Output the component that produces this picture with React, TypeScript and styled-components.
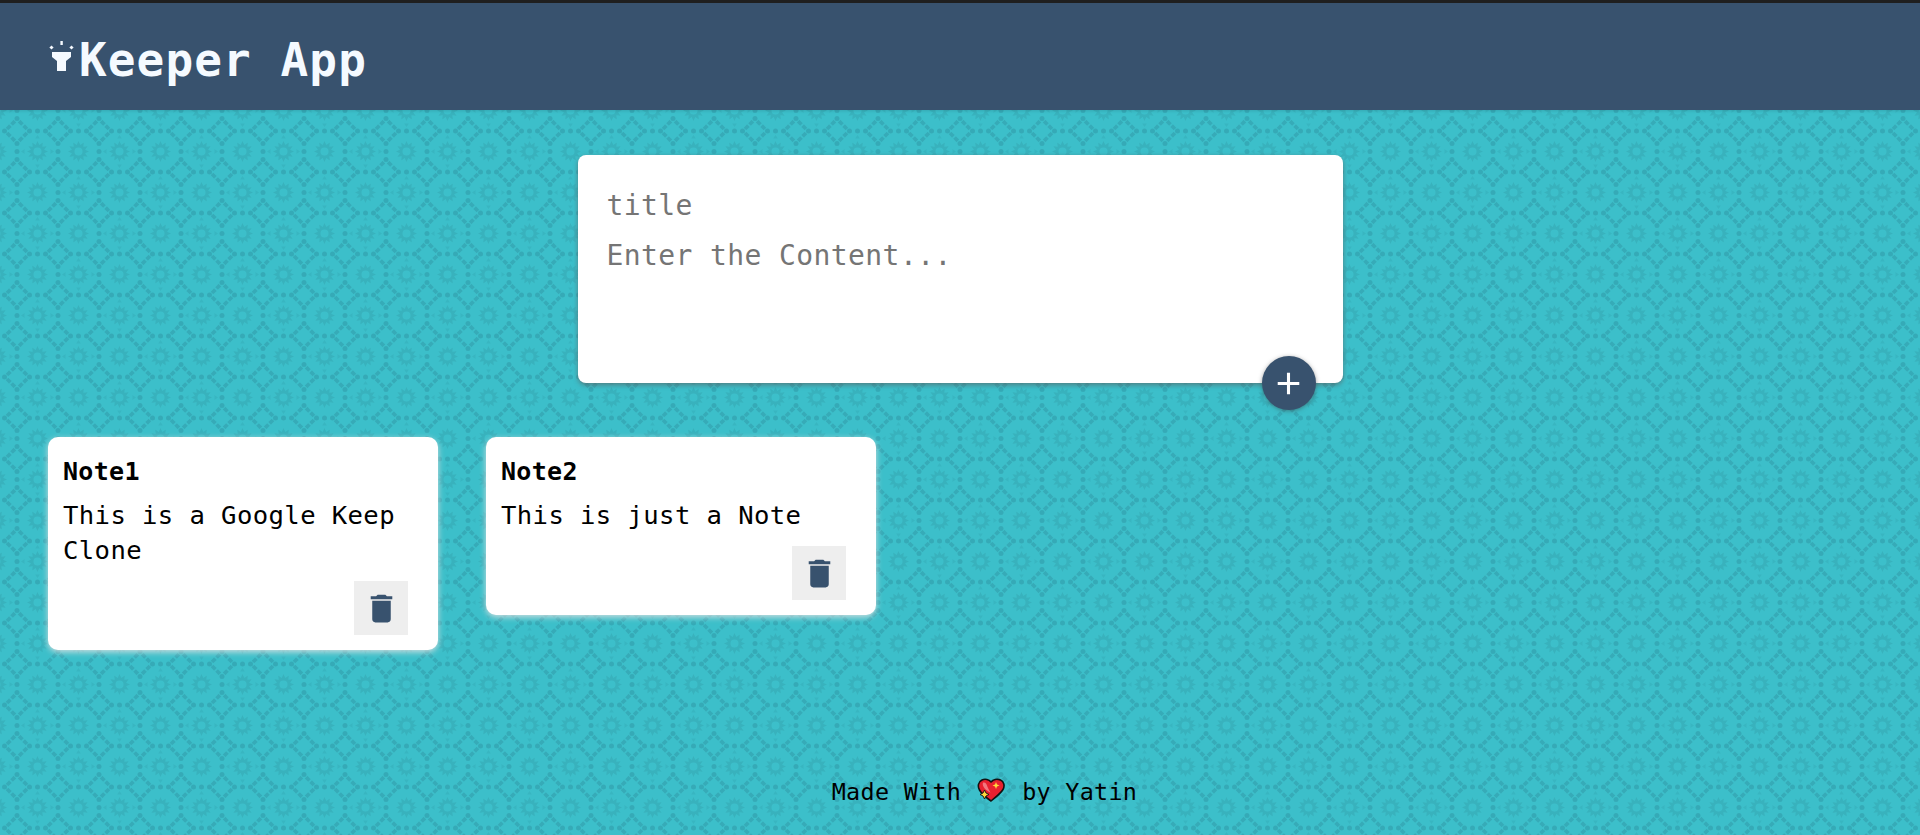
import * as React from 'react';
import styled, { createGlobalStyle } from 'styled-components';

const MONO = `"DejaVu Sans Mono", "Liberation Mono", monospace`;

// background tile: checker of octagons with a spiky ring in each cell
const buildTile = () => {
    const CELL = 41;
    const ink = '#2f98a6';
    let out = '';
    const centers = [
        [20.5, 20.5, 0],
        [61.5, 20.5, 1],
        [20.5, 61.5, 1],
        [61.5, 61.5, 0],
    ];
    centers.forEach(([cx, cy, kind]) => {
        let outer = '';
        const spikes = 12;
        for (let i = 0; i < spikes * 2; i++) {
            const r = i % 2 === 0 ? 10.5 : 6.8;
            const a = (Math.PI * i) / spikes;
            outer += `${i === 0 ? 'M' : 'L'}${(cx + r * Math.cos(a)).toFixed(1)} ${(cy + r * Math.sin(a)).toFixed(1)}`;
        }
        outer += 'Z';
        const hole = `M${cx - 4} ${cy}a4 4 0 1 0 8 0a4 4 0 1 0 -8 0Z`;
        out += `<path fill-rule="evenodd" fill="${ink}" fill-opacity=".34" d="${outer}${hole}"/>`;

        // three dots on every cell edge
        [-8, 0, 8].forEach((d) => {
            out += `<circle cx="${cx + d}" cy="${cy - CELL / 2}" r="2.5" fill="${ink}" fill-opacity=".52"/>`;
            out += `<circle cx="${cx - CELL / 2}" cy="${cy + d}" r="2.5" fill="${ink}" fill-opacity=".52"/>`;
        });

        // chamfers: together they make a diamond round each lattice corner
        [
            [1, 1],
            [1, -1],
            [-1, 1],
            [-1, -1],
        ].forEach(([sx, sy]) => {
            const x1 = cx + sx * 10.5;
            const y1 = cy + sy * 18.5;
            const x2 = cx + sx * 18.5;
            const y2 = cy + sy * 10.5;
            out += `<line x1="${x1}" y1="${y1}" x2="${x2}" y2="${y2}" stroke="${ink}" stroke-opacity=".5" stroke-width="3.8" stroke-dasharray="4.800 1.600"/>`;
        });
        if (kind === 1) {
            [
                [0, -14.5],
                [0, 14.5],
                [-14.5, 0],
                [14.5, 0],
            ].forEach(([dx, dy]) => {
                out += `<path d="M${cx + dx - 2.5} ${cy + dy + 1.5}h5l-2.5 -3.500z" fill="${ink}" fill-opacity=".26" transform="rotate(${dx === 0 ? (dy < 0 ? 0 : 180) : dx < 0 ? 270 : 90} ${cx + dx} ${cy + dy})"/>`;
            });
        }
    });
    // repeat the group one tile over so that dots on the seam are whole
    const copies = [82, 0].map((x) =>
        [82, 0].map((y) => `<use href="#c" x="${x}" y="${y}"/>`).join('')
    );
    const svg = `<svg xmlns="http://www.w3.org/2000/svg" xmlns:xlink="http://www.w3.org/1999/xlink" width="82" height="82" viewBox="0 0 82 82"><defs><g id="c">${out}</g></defs>${copies.join('')}</svg>`;
    return `url("data:image/svg+xml,${encodeURIComponent(svg)}")`;
};

const GlobalStyle = createGlobalStyle`
    * {
        box-sizing: border-box;
    }
    html, body {
        margin: 0;
        padding: 0;
    }
    body {
        font-family: ${MONO};
        background-color: #3cbfca;
        background-image: ${buildTile()};
        background-position: 17px 8px;
    }
`;

const Page = styled.div`
    min-height: 100vh;
    display: flex;
    flex-direction: column;
`;

const HeaderBar = styled.header`
    height: 110px;
    display: flex;
    align-items: center;
    padding: 6px 48px 0;
    background: #38526e;
    border-top: 3px solid #1f1f1f;
    box-shadow: 0 1px 3px rgba(0, 0, 0, 0.12);
`;

const Logo = styled.h1`
    margin: 0;
    display: flex;
    align-items: center;
    font-family: ${MONO};
    font-size: 46px;
    letter-spacing: 1.1px;
    line-height: 1;
    font-weight: 700;
    color: #f5faff;
    svg {
        width: 27px;
        height: 32px;
        margin: -7px 4px 0 0;
    }
`;

const Composer = styled.form`
    position: relative;
    align-self: center;
    width: 765px;
    height: 228px;
    margin-top: 45px;
    padding: 26px 29px 0;
    display: flex;
    flex-direction: column;
    background: #fff;
    border-radius: 8px;
    box-shadow: 0 2px 5px rgba(90, 90, 90, 0.65);
`;

const fieldCss = `
    width: 100%;
    padding: 0;
    border: none;
    outline: none;
    background: transparent;
    resize: none;
    font-family: ${MONO};
    font-size: 28px;
    letter-spacing: 0.4px;
    line-height: 50px;
    color: #333;
    &::placeholder {
        color: #757575;
        opacity: 1;
    }
`;

const TitleInput = styled.input`
    ${fieldCss}
    height: 50px;
`;

const ContentInput = styled.textarea`
    ${fieldCss}
    height: 120px;
`;

const AddButton = styled.button`
    position: absolute;
    right: 27px;
    bottom: -27px;
    width: 54px;
    height: 54px;
    padding: 0;
    display: flex;
    align-items: center;
    justify-content: center;
    border: none;
    border-radius: 50%;
    background: #38526e;
    color: #fff;
    box-shadow: 0 1px 4px rgba(60, 60, 60, 0.5);
    svg {
        width: 37px;
        height: 37px;
    }
`;

const NoteRow = styled.section`
    display: flex;
    align-items: flex-start;
    gap: 48px;
    margin-top: 54px;
    padding: 0 48px;
`;

const NoteCard = styled.article`
    width: 390px;
    padding: 17px 15px 15px;
    display: flex;
    flex-direction: column;
    background: #fff;
    border-radius: 10px;
    box-shadow: 0 2px 6px rgba(225, 225, 225, 0.9);
`;

const NoteTitle = styled.h2`
    margin: 0 0 9px;
    font-family: ${MONO};
    font-size: 25px;
    letter-spacing: 0.3px;
    line-height: 35px;
    font-weight: 700;
    color: #000;
`;

const NoteBody = styled.p`
    margin: 0 0 13px;
    font-size: 25.6px;
    letter-spacing: 0.4px;
    line-height: 35px;
    color: #000;
`;

const DeleteButton = styled.button`
    align-self: flex-end;
    width: 54px;
    height: 54px;
    margin-right: 15px;
    padding: 0;
    display: flex;
    align-items: center;
    justify-content: center;
    border: none;
    background: #eeeeee;
    color: #38526e;
    svg {
        width: 37px;
        height: 37px;
    }
`;

const Footer = styled.footer`
    margin-top: auto;
    height: 58px;
    padding-left: 49px;
    display: flex;
    align-items: flex-start;
    justify-content: center;
    font-size: 23.4px;
    letter-spacing: 0.3px;
    line-height: 30px;
    color: #000;
    white-space: pre;
    svg {
        width: 28px;
        height: 24px;
        margin: 1px 17px 0 16px;
    }
`;

const LampIcon = () => (
    <svg viewBox="0 0 27 32" aria-hidden="true">
        <rect x="12.4" y="1" width="2.4" height="4" fill="#f5faff" />
        <rect x="2" y="6" width="3" height="3" fill="#f5faff" transform="rotate(45 3.5 7.5)" />
        <rect x="22" y="6" width="3" height="3" fill="#f5faff" transform="rotate(45 23.5 7.5)" />
        <path d="M4 12h19v5l-5 4v10H9V21l-5-4z" fill="#f5faff" />
    </svg>
);

const PlusIcon = () => (
    <svg viewBox="0 0 24 24" fill="currentColor" aria-hidden="true">
        <path d="M19 13h-6v6h-2v-6H5v-2h6V5h2v6h6v2z" />
    </svg>
);

const TrashIcon = () => (
    <svg viewBox="0 0 24 24" fill="currentColor" aria-hidden="true">
        <path d="M6 19c0 1.1.9 2 2 2h8c1.1 0 2-.9 2-2V7H6v12zM19 4h-3.5l-1-1h-5l-1 1H5v2h14V4z" />
    </svg>
);

const SparklingHeart = () => (
    <svg viewBox="0 0 28 24" aria-hidden="true">
        <path
            d="M14 4C12 1.500 8 .5 5 2 1 4 .5 8.500 2.500 12 4.500 15.500 9 19.500 14 23c5-4 10-8 12-11.500C28 8 27 3.500 23.500 2 20 .5 16 1.500 14 4z"
            fill="#e8202f"
            stroke="#111"
            strokeWidth="1.6"
            strokeLinejoin="round"
        />
        <path d="M6 4.500c2.500-.5 3.500 1 4 3s2 4.500 3.500 7c-4-1.500-9-6-7.500-10z" fill="#f2777f" />
        <path d="M19 4l1 2.500 2.500 1-2.500 1-1 2.500-1-2.500-2.500-1 2.500-1z" fill="#ffd83d" />
        <path d="M7.500 12l1.500 3 3 1.500-3 1.500-1.500 3-1.500-3-3-1.500 3-1.500z" fill="#ffd83d" stroke="#111" strokeWidth="0.9" strokeLinejoin="round" />
    </svg>
);

interface Note {
    id: number;
    title: string;
    content: string;
}

const notes: Note[] = [
    { id: 1, title: 'Note1', content: 'This is a Google Keep Clone' },
    { id: 2, title: 'Note2', content: 'This is just a Note' },
];

const App: React.FC = () => {
    return (
        <Page>
            <GlobalStyle />
            <HeaderBar>
                <Logo>
                    <LampIcon />
                    Keeper App
                </Logo>
            </HeaderBar>
            <Composer onSubmit={(e) => e.preventDefault()}>
                <TitleInput placeholder="title" />
                <ContentInput placeholder="Enter the Content..." />
                <AddButton type="submit" aria-label="Add note">
                    <PlusIcon />
                </AddButton>
            </Composer>
            <NoteRow>
                {notes.map((note) => (
                    <NoteCard key={note.id}>
                        <NoteTitle>{note.title}</NoteTitle>
                        <NoteBody>{note.content}</NoteBody>
                        <DeleteButton type="button" aria-label="Delete note">
                            <TrashIcon />
                        </DeleteButton>
                    </NoteCard>
                ))}
            </NoteRow>
            <Footer>
                Made With
                <SparklingHeart />
                by Yatin
            </Footer>
        </Page>
    );
};

export default App;
